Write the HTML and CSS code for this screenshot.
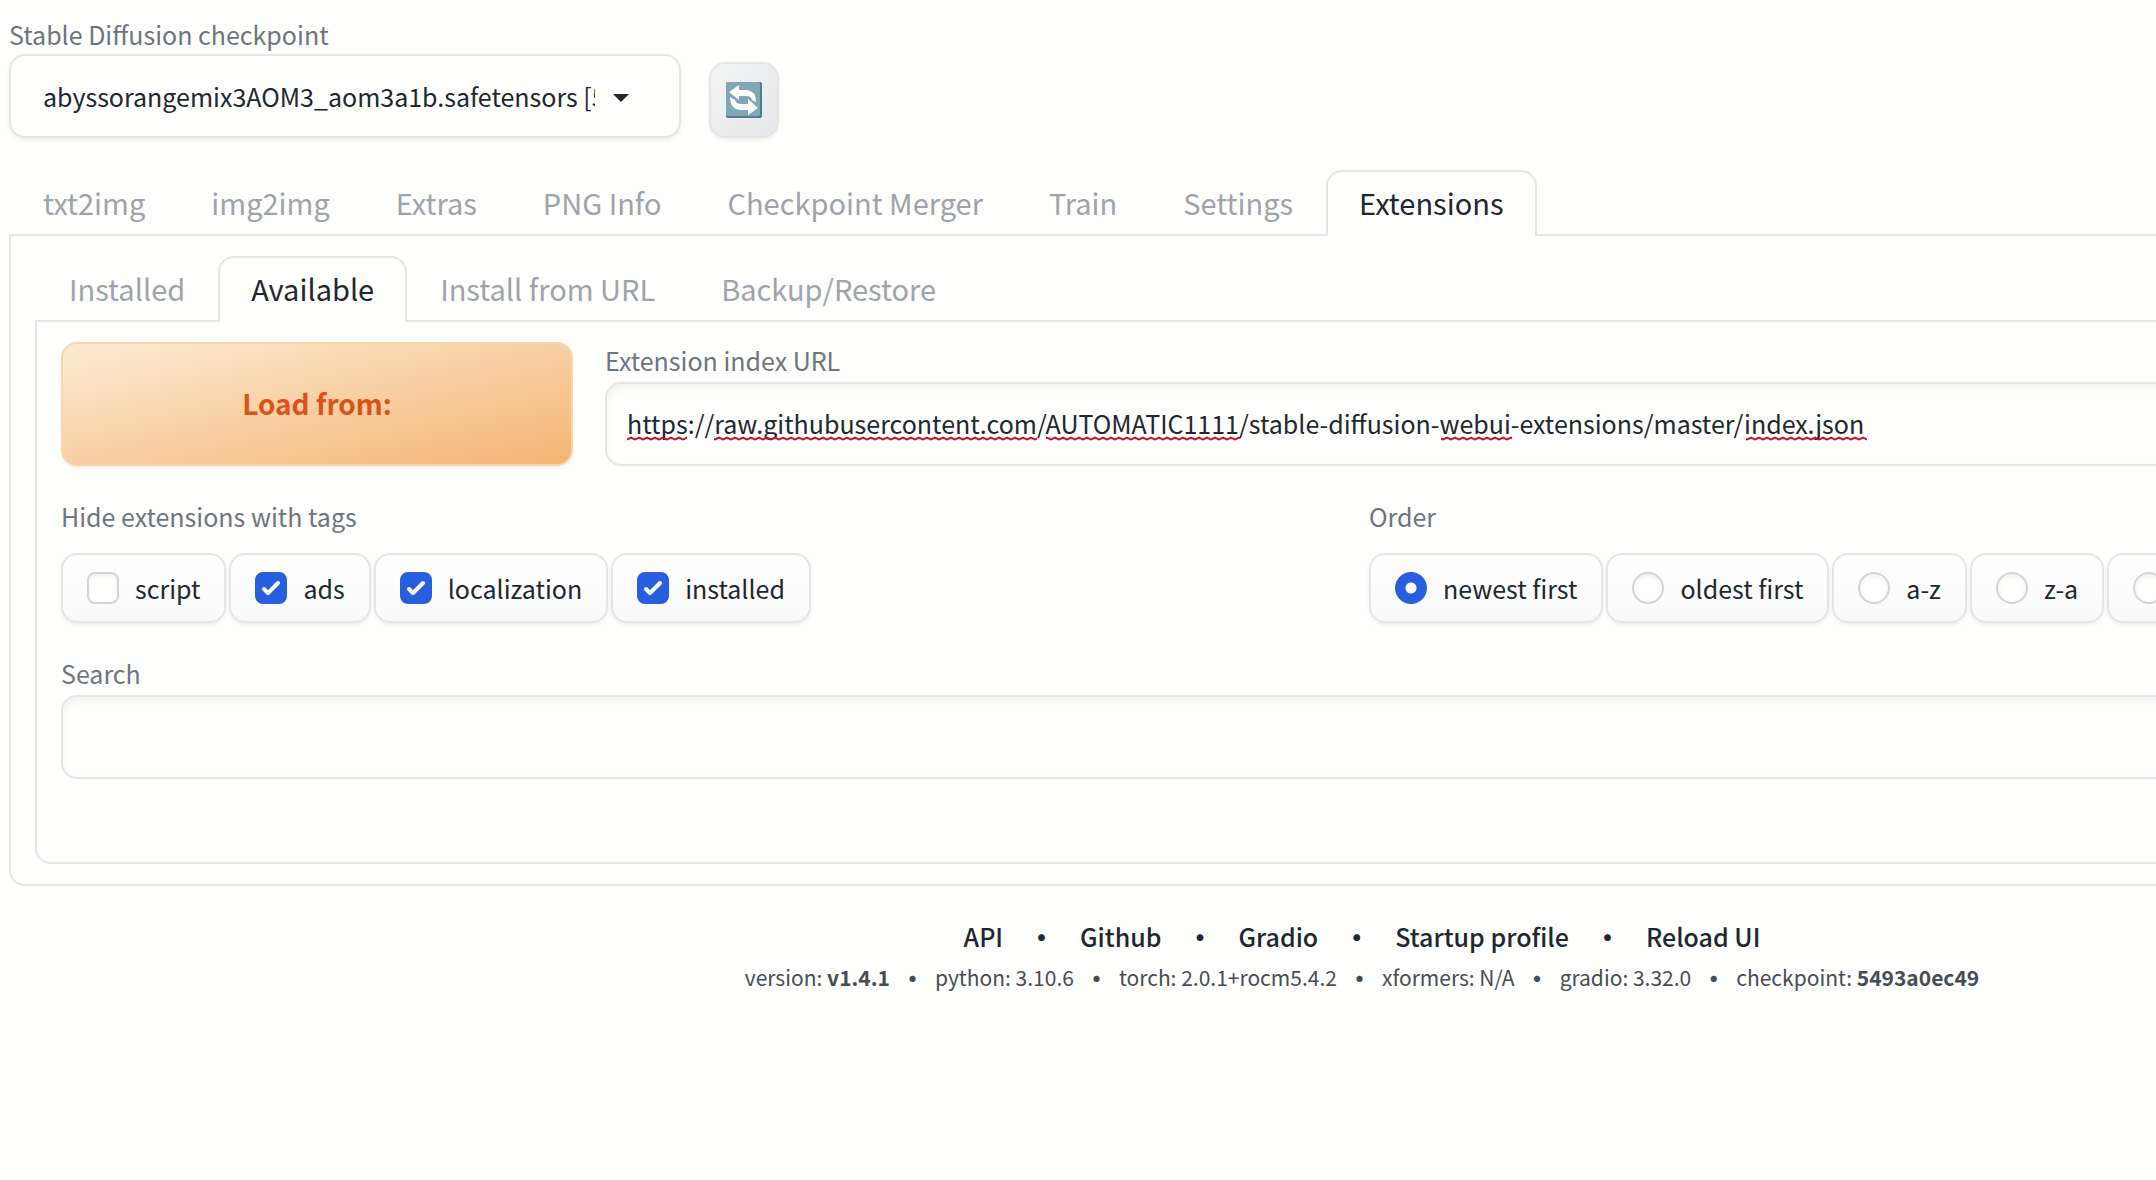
FILE: index.html
```html
<!DOCTYPE html>
<html lang="en">
<head>
<meta charset="utf-8">
<title>Stable Diffusion</title>
<link rel="stylesheet" href="styles.css">
</head>
<body>
<div class="app">
  <header class="quicksettings">
    <div class="field compact">
      <label class="label" for="checkpoint">Stable Diffusion checkpoint</label>
      <div class="dropdown">
        <select class="dropdown-select" id="checkpoint">
          <option>abyssorangemix3AOM3_aom3a1b.safetensors [5493a0ec49]</option>
        </select>
        <svg class="dropdown-arrow" viewBox="0 0 16 8" aria-hidden="true"><path d="M0 0h16L8 8z"/></svg>
      </div>
    </div>
    <button class="tool" type="button" aria-label="Refresh">
      <svg class="tool-icon" viewBox="0 0 36 36" aria-hidden="true">
        <rect width="36" height="36" rx="2" fill="#4d7f8b"/>
        <rect width="34" height="34" rx="2" fill="#7fa8b4"/>
        <path fill="#fff" d="M3 10 13 3v5h8q9 1 9 12l-4-2q-1-4-6-4h-7v4zM32 26l-10 7v-5h-8Q4 27 4 15l5 3q1 4 6 4h7v-5z"/>
      </svg>
    </button>
  </header>

  <nav class="tabs">
    <button class="tab" type="button">txt2img</button>
    <button class="tab" type="button">img2img</button>
    <button class="tab" type="button">Extras</button>
    <button class="tab" type="button">PNG Info</button>
    <button class="tab" type="button">Checkpoint Merger</button>
    <button class="tab" type="button">Train</button>
    <button class="tab" type="button">Settings</button>
    <button class="tab selected" type="button">Extensions</button>
  </nav>
  <main class="panel">
    <nav class="tabs">
      <button class="tab" type="button">Installed</button>
      <button class="tab selected" type="button">Available</button>
      <button class="tab" type="button">Install from URL</button>
      <button class="tab" type="button">Backup/Restore</button>
    </nav>
    <section class="panel inner">
      <div class="load-row">
        <button class="primary" type="button">Load from:</button>
        <div class="field">
          <label class="label" for="index-url">Extension index URL</label>
          <div class="spelled">
            <input class="textbox" id="index-url" type="text" value="https://raw.githubusercontent.com/AUTOMATIC1111/stable-diffusion-webui-extensions/master/index.json">
            <svg class="squiggles" width="1250" height="5" aria-hidden="true">
              <defs>
                <pattern id="wave" width="8" height="5" patternUnits="userSpaceOnUse">
                  <path d="M-4 1.5 0 3.5 4 1.5 8 3.5 12 1.5" fill="none" stroke="#cc0a22" stroke-width="2"/>
                </pattern>
              </defs>
              <g fill="url(#wave)">
                <rect x="0" width="60" height="5"/>
                <rect x="87" width="323" height="5"/>
                <rect x="419" width="194" height="5"/>
                <rect x="814" width="71" height="5"/>
                <rect x="1119" width="121" height="5"/>
              </g>
            </svg>
          </div>
        </div>
      </div>

      <div class="filter-row">
        <fieldset class="group">
          <legend class="label">Hide extensions with tags</legend>
          <div class="chips">
            <label class="chip"><input class="check" type="checkbox">script</label>
            <label class="chip"><input class="check" type="checkbox" checked>ads</label>
            <label class="chip"><input class="check" type="checkbox" checked>localization</label>
            <label class="chip"><input class="check" type="checkbox" checked>installed</label>
          </div>
        </fieldset>
        <fieldset class="group">
          <legend class="label">Order</legend>
          <div class="chips">
            <label class="chip"><input class="check radio" type="radio" name="order" checked>newest first</label>
            <label class="chip"><input class="check radio" type="radio" name="order">oldest first</label>
            <label class="chip"><input class="check radio" type="radio" name="order">a-z</label>
            <label class="chip"><input class="check radio" type="radio" name="order">z-a</label>
            <label class="chip"><input class="check radio" type="radio" name="order">internal order</label>
          </div>
        </fieldset>
      </div>

      <div class="field">
        <label class="label" for="search">Search</label>
        <input class="textbox" id="search" type="text">
      </div>
    </section>
  </main>

  <footer class="footer">
    <div class="links">
      <a href="#">API</a><span class="dot">•</span><a href="#">Github</a><span class="dot">•</span><a href="#">Gradio</a><span class="dot">•</span><a href="#">Startup profile</a><span class="dot">•</span><a href="#">Reload UI</a>
    </div>
    <div class="versions">
      <span>version: <b>v1.4.1</b></span><span class="dot">•</span><span>python: 3.10.6</span><span class="dot">•</span><span>torch: 2.0.1+rocm5.4.2</span><span class="dot">•</span><span>xformers: N/A</span><span class="dot">•</span><span>gradio: 3.32.0</span><span class="dot">•</span><span>checkpoint: <b>5493a0ec49</b></span>
    </div>
  </footer>
</div>
</body>
</html>
```
FILE: styles.css
```css
:root {
  --bg: #fefefd;
  --line: #e4e5e4;
  --text: #20272f;
  --muted: #6e757c;
  --faint: #9fa4a9;
  --blue: #285fdf;
}

* {
  box-sizing: border-box;
}

body {
  margin: 0;
  overflow-x: hidden;
  background: var(--bg);
  color: var(--text);
  font-family: "Noto Sans CJK SC", "Open Sans", sans-serif;
  font-size: 25px;
  line-height: 36px;
}

button,
input,
select {
  font: inherit;
  color: inherit;
}

/* The app is wider than the window and runs off its right edge. */
.app {
  width: calc(100% + 568px);
  padding: 16px 9px;
}

.quicksettings {
  display: flex;
  align-items: flex-end;
  gap: 28px;
  margin-bottom: 32px;
}

.field {
  display: flex;
  flex-direction: column;
  gap: 4px;
}

.field.compact {
  gap: 2px;
}

.label {
  padding: 0;
  color: var(--muted);
}

.dropdown {
  position: relative;
  width: 672px;
}

.dropdown-select {
  width: 100%;
  height: 84px;
  padding: 0 84px 0 32px;
  border: 2px solid var(--line);
  border-radius: 16px;
  background: var(--bg);
  box-shadow: 0 2px 4px rgba(0, 0, 0, 0.06);
  appearance: none;
}

.dropdown-arrow {
  position: absolute;
  top: 40px;
  right: 52px;
  width: 16px;
  height: 8px;
  fill: var(--text);
  pointer-events: none;
}

.tool {
  display: flex;
  align-items: center;
  justify-content: center;
  width: 70px;
  height: 76px;
  padding: 0;
  border: 2px solid var(--line);
  border-radius: 16px;
  background: linear-gradient(to bottom right, #f3f4f4, #e5e7ea);
  box-shadow: 0 2px 4px rgba(0, 0, 0, 0.06);
}

.tool-icon {
  width: 36px;
  height: 36px;
}

.tabs {
  display: flex;
  margin-bottom: -2px;
  padding-left: 1px;
}

.tab {
  height: 66px;
  padding: 0 31px 4px;
  border: 2px solid transparent;
  border-bottom: 0;
  border-radius: 16px 16px 0 0;
  background: none;
  color: var(--faint);
  font-size: 29px;
  line-height: 40px;
}

.tab.selected {
  border-color: var(--line);
  background: var(--bg);
  color: var(--text);
}

.panel {
  padding: 20px 24px;
  border: 2px solid var(--line);
  border-radius: 0 0 16px 16px;
}

.inner {
  display: flex;
  flex-direction: column;
  gap: 32px;
  padding: 20px 24px 83px;
}

.load-row {
  display: grid;
  grid-template-columns: 512px 1fr;
  gap: 32px;
}

.primary {
  padding-bottom: 4px;
  border: 2px solid #f6d7ab;
  border-radius: 16px;
  background: linear-gradient(to bottom right, #fdebd3, #f4b474);
  box-shadow: 0 2px 4px rgba(0, 0, 0, 0.06);
  color: #d9541a;
  font-size: 28px;
  font-weight: 600;
}

.spelled {
  position: relative;
}

.textbox {
  display: block;
  width: 100%;
  height: 84px;
  padding: 0 20px 2px;
  border: 2px solid var(--line);
  border-radius: 16px;
  background: var(--bg);
  box-shadow: inset 0 4px 8px rgba(0, 0, 0, 0.05);
}

.squiggles {
  position: absolute;
  top: 54px;
  left: 22px;
}

.filter-row {
  display: grid;
  grid-template-columns: 1fr 1fr;
  gap: 14px;
}

.group {
  min-width: 0;
  margin: 0;
  padding: 0;
  border: 0;
}

.chips {
  display: flex;
  gap: 3px;
  padding-top: 19px;
}

.chip {
  display: flex;
  align-items: center;
  gap: 16px;
  height: 70px;
  padding: 0 24px;
  border: 2px solid var(--line);
  border-radius: 16px;
  background: linear-gradient(to bottom, var(--bg), #f9fafa);
  box-shadow: 0 2px 4px rgba(0, 0, 0, 0.06);
  white-space: nowrap;
}

.check {
  width: 32px;
  height: 32px;
  margin: 0;
  border: 2px solid #d2d4d5;
  border-radius: 8px;
  background: var(--bg);
  box-shadow: inset 0 2px 4px rgba(0, 0, 0, 0.06);
  appearance: none;
}

.check:checked {
  border-color: var(--blue);
  background: var(--blue) url("data:image/svg+xml,%3Csvg viewBox='0 0 16 16' fill='white' xmlns='http://www.w3.org/2000/svg'%3E%3Cpath d='M12.207 4.793a1 1 0 010 1.414l-5 5a1 1 0 01-1.414 0l-2-2a1 1 0 011.414-1.414L6.5 9.086l4.293-4.293a1 1 0 011.414 0z'/%3E%3C/svg%3E") center / 32px;
  box-shadow: none;
}

.radio {
  border-radius: 50%;
}

.radio:checked {
  background: radial-gradient(circle, #fff 0 5px, var(--blue) 6px);
}

.footer {
  margin-top: 32px;
  text-align: center;
}

.links,
.versions {
  display: flex;
  justify-content: center;
}

.links {
  gap: 24px;
  margin-bottom: 5px;
  font-weight: 500;
}

.links a {
  color: inherit;
  text-decoration: none;
}

.dot {
  font-size: 29px;
}

.versions {
  gap: 8px;
  color: #474d54;
  font-size: 21px;
}
```
